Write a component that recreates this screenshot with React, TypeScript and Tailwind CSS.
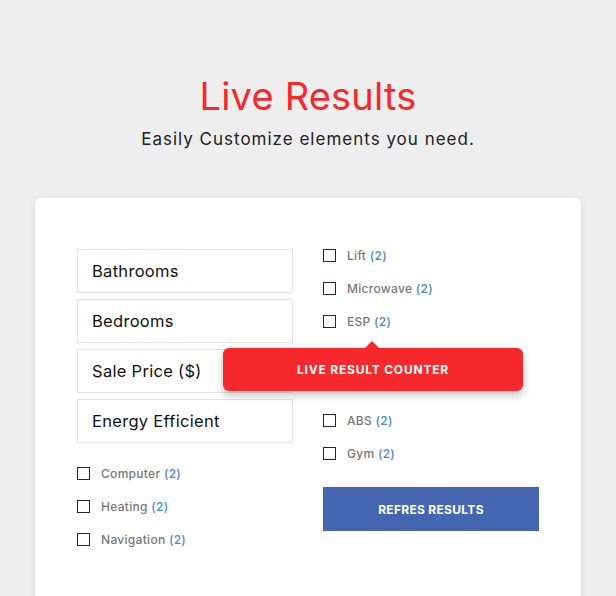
import React from "react";

const fields = ["Bathrooms", "Bedrooms", "Sale Price ($)", "Energy Efficient"];
const leftChecks = ["Computer", "Heating", "Navigation"];
const rightChecks = ["Lift", "Microwave", "ESP", "Parking", "Garden", "ABS", "Gym"];
// items sitting under the tooltip are not visible in the picture
const covered = ["Parking", "Garden"];

function Check({ label, hidden }: { label: string; hidden?: boolean }) {
  return (
    <label className={`flex h-[33px] items-center gap-[11px] ${hidden ? "invisible" : ""}`}>
      <span className="h-[13px] w-[13px] shrink-0 border border-[#1c2b3a] bg-white" />
      <span className="text-[12px] font-medium tracking-[0.3px] text-[#777]">
        {label} <span className="text-[#4a86d0]">(2)</span>
      </span>
    </label>
  );
}

export default function App() {
  return (
    <div className="h-[596px] w-[616px] overflow-hidden bg-[#eeeeee] font-['Inter',sans-serif]">
      <div className="pt-[74px] text-center">
        <h1 className="text-[38px] leading-[44px] font-normal tracking-[0.2px] text-[#f5282b]">Live Results</h1>
        <p className="mt-[10px] text-[17px] leading-[22px] tracking-[1px] text-[#222]">Easily Customize elements you need.</p>
      </div>
      <div className="relative mx-[35px] mt-[48px] h-[420px] rounded-[6px] bg-white px-[42px] pt-[51px] shadow-[0_2px_10px_rgba(0,0,0,0.08)]">
        <div className="grid grid-cols-[216px_216px] gap-[30px]">
          <div>
            <div className="flex flex-col gap-[6px]">
              {fields.map((f) => (
                <div key={f} className="flex h-[44px] items-center border border-[#e2e2e2] px-[14px] text-[16.5px] tracking-[0.3px] text-[#111]">
                  {f}
                </div>
              ))}
            </div>
            <div className="mt-[14px]">
              {leftChecks.map((c) => (
                <Check key={c} label={c} />
              ))}
            </div>
          </div>
          <div className="-mt-[10px]">
            {rightChecks.map((c) => (
              <Check key={c} label={c} hidden={covered.includes(c)} />
            ))}
            <button className="mt-[17px] h-[44px] w-[216px] bg-[#4466b0] pt-[2px] text-[12px] font-bold tracking-[0.3px] text-white">
              REFRES RESULTS
            </button>
          </div>
        </div>
        <div className="absolute left-[188px] top-[150px] flex h-[43px] w-[300px] items-center justify-center rounded-[6px] bg-[#f5282b] text-[12px] font-bold tracking-[0.8px] text-white shadow-[0_4px_10px_rgba(0,0,0,0.25)]">
          <span className="absolute -top-[7px] left-[142px] h-0 w-0 border-x-[7px] border-b-[7px] border-x-transparent border-b-[#f5282b]" />
          LIVE RESULT COUNTER
        </div>
      </div>
    </div>
  );
}
